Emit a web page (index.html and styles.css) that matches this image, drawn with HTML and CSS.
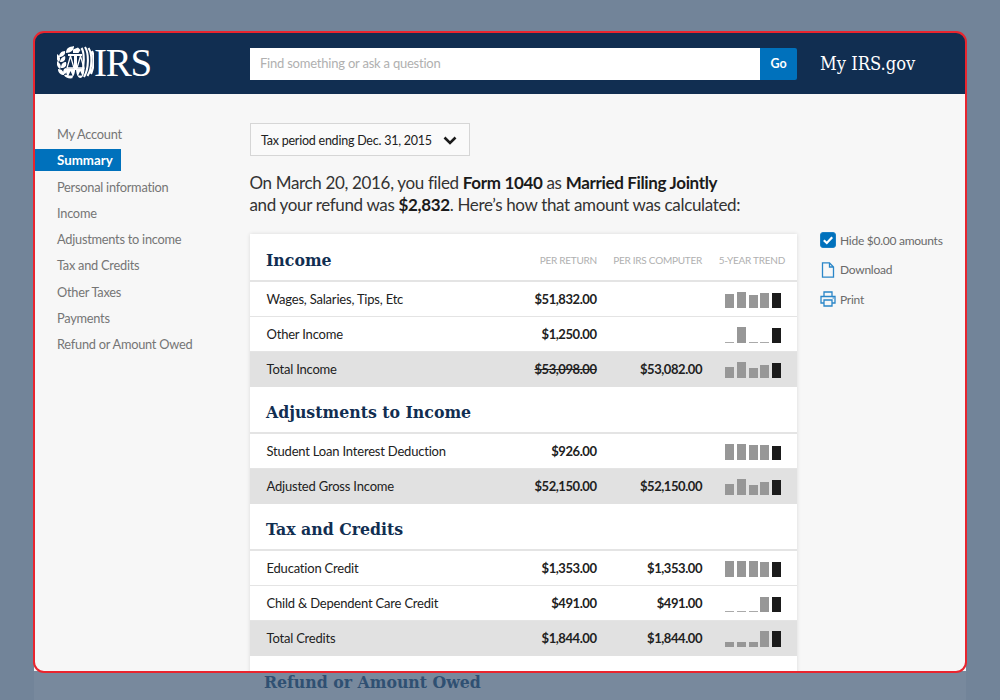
FILE: index.html
```html
<!DOCTYPE html>
<html lang="en">
<head>
<meta charset="utf-8">
<title>IRS Summary</title>
<link rel="stylesheet" href="styles.css">
</head>
<body>
<div class="app">
  <header class="top">
    <div class="logo">
      <svg class="eagle" width="37" height="33" viewBox="0 0 37 33">
        <g fill="#fff">
          <path d="M9 7C9 2 12 1 17 0c0 4-3 7-8 7z"/>
          <path d="M8 5C4 5 2 8 2 11c3 0 7-2 6-6z"/>
          <path d="M0 8c-1 4 0 7 2 8 2-3 1-6-2-8z"/>
          <path d="M8 10c-3 1-5 3-5 6 4 0 6-2 5-6z"/>
          <path d="M0 15c-1 4 1 7 3 8 2-3 0-6-3-8z"/>
          <path d="M9 16c-3 0-5 2-5 6 4 0 6-2 5-6z"/>
          <path d="M1 23c0 4 3 6 6 6 0-3-2-6-6-6z"/>
          <path d="M9 22c-2 0-3 2-3 6 3 0 5-2 3-6z"/>
          <path d="M7 29c1 3 6 4 9 3-2-2-6-4-9-3z"/>
          <path d="M11 8h14v2h-5v14h-3V10h-6z"/>
          <path d="M16 3.500l5-2 2.500 2.500-2 3H16z"/>
        </g>
        <g fill="none" stroke="#fff">
          <path stroke-width="2.100" d="M24.500 2c3 4 3 18 0 27M28 1c4 6 4 22-1 30M31.500 2c4 6 4 20-1 28M35 5c2.500 5 2.500 15-1 23"/>
          <path stroke-width="1.300" d="M13.500 10l-3.500 12h7zM23.500 10l-3.500 12h7z"/>
        </g>
        <path fill="#fff" d="M8.800 22.500h9.400c0 5-2 9.500-4.700 9.500s-4.700-4.500-4.700-9.500zM19 22.500h8.500c0 5-1.700 9.500-4.200 9.500S19 27.500 19 22.500z"/>
        <path fill="#112e51" d="M13.500 25l2 4.500h-4zM23.200 25l2 4.500h-4z"/>
      </svg>
      <span class="irs">IRS</span>
    </div>
    <div class="search">
      <div class="search-box">Find something or ask a question</div>
      <div class="go">Go</div>
    </div>
    <div class="site">My IRS.gov</div>
  </header>
  <div class="body">
    <nav class="nav">
      <a>My Account</a>
      <a class="active">Summary</a>
      <a>Personal information</a>
      <a>Income</a>
      <a>Adjustments to income</a>
      <a>Tax and Credits</a>
      <a>Other Taxes</a>
      <a>Payments</a>
      <a>Refund or Amount Owed</a>
    </nav>
    <main class="main">
      <div class="period"><span>Tax period ending Dec. 31, 2015</span>
        <svg width="14" height="9" viewBox="0 0 14 9"><path d="M1.500 1.500L7 7l5.500-5.500" fill="none" stroke="#1b1b1b" stroke-width="2.600"/></svg>
      </div>
      <p class="lead">On March 20, 2016, you filed <b>Form 1040</b> as <b>Married Filing Jointly</b><br>and your refund was <b>$2,832</b>. Here’s how that amount was calculated:</p>
      <div class="columns">
        <div class="sheet">
          <div class="head first">
            <h2>Income</h2>
            <span class="col">PER RETURN</span><span class="col wide">PER IRS COMPUTER</span><span class="col tr">5-YEAR TREND</span>
          </div>
          <div class="row"><span class="lbl">Wages, Salaries, Tips, Etc</span><span class="num">$51,832.00</span><span class="num"></span>
            <span class="trend"><i style="height:14px"></i><i style="height:16px"></i><i style="height:13px"></i><i style="height:15px"></i><i class="k" style="height:15px"></i></span></div>
          <div class="row"><span class="lbl">Other Income</span><span class="num">$1,250.00</span><span class="num"></span>
            <span class="trend"><i class="z"></i><i style="height:16px"></i><i class="z"></i><i class="z"></i><i class="k" style="height:15px"></i></span></div>
          <div class="row total"><span class="lbl">Total Income</span><span class="num"><s>$53,098.00</s></span><span class="num">$53,082.00</span>
            <span class="trend"><i style="height:11px"></i><i style="height:16px"></i><i style="height:10px"></i><i style="height:13px"></i><i class="k" style="height:15px"></i></span></div>
          <div class="head">
            <h2>Adjustments to Income</h2>
          </div>
          <div class="row"><span class="lbl">Student Loan Interest Deduction</span><span class="num">$926.00</span><span class="num"></span>
            <span class="trend"><i style="height:16px"></i><i style="height:16px"></i><i style="height:15px"></i><i style="height:15px"></i><i class="k" style="height:14px"></i></span></div>
          <div class="row total"><span class="lbl">Adjusted Gross Income</span><span class="num">$52,150.00</span><span class="num">$52,150.00</span>
            <span class="trend"><i style="height:11px"></i><i style="height:16px"></i><i style="height:10px"></i><i style="height:13px"></i><i class="k" style="height:15px"></i></span></div>
          <div class="head">
            <h2>Tax and Credits</h2>
          </div>
          <div class="row"><span class="lbl">Education Credit</span><span class="num">$1,353.00</span><span class="num">$1,353.00</span>
            <span class="trend"><i style="height:16px"></i><i style="height:16px"></i><i style="height:16px"></i><i style="height:15px"></i><i class="k" style="height:15px"></i></span></div>
          <div class="row"><span class="lbl">Child &amp; Dependent Care Credit</span><span class="num">$491.00</span><span class="num">$491.00</span>
            <span class="trend"><i class="z"></i><i class="z"></i><i class="z"></i><i style="height:15px"></i><i class="k" style="height:15px"></i></span></div>
          <div class="row total"><span class="lbl">Total Credits</span><span class="num">$1,844.00</span><span class="num">$1,844.00</span>
            <span class="trend"><i style="height:5px"></i><i style="height:5px"></i><i style="height:5px"></i><i style="height:16px"></i><i class="k" style="height:16px"></i></span></div>
          <div class="head last">
            <h2>Refund or Amount Owed</h2>
          </div>
        </div>
        <aside class="tools">
          <div class="tool">
            <svg width="16" height="16" viewBox="0 0 16 16"><rect x="0.500" y="0.500" width="15" height="15" rx="2.500" fill="#0071bc" stroke="#1a7fc4"/><path d="M3.800 8.200l3 2.800 5.400-5.800" fill="none" stroke="#fff" stroke-width="2.200"/></svg>
            <span>Hide $0.00 amounts</span></div>
          <div class="tool">
            <svg width="16" height="16" viewBox="0 0 16 16"><path d="M2.500 .8h7l4 4.200v10.200h-11z M9.500 .8v4.200h4" fill="none" stroke="#2a86c8" stroke-width="1.300"/></svg>
            <span>Download</span></div>
          <div class="tool">
            <svg width="16" height="16" viewBox="0 0 16 16"><path d="M4 5V1h8v4M4 12H1V5.500h14V12h-3M4 9h8v6H4z" fill="none" stroke="#2a86c8" stroke-width="1.300"/><path d="M12.500 7h1.500" stroke="#2a86c8"/></svg>
            <span>Print</span></div>
        </aside>
      </div>
    </main>
  </div>
</div>
<div class="dim"></div>
<div class="frame"></div>
</body>
</html>
```

FILE: styles.css
```css
* { box-sizing: border-box; }
html, body { margin: 0; height: 700px; overflow: hidden; }
body {
  background: #728499;
  font-family: Lato, "Noto Sans", sans-serif;
  color: #212121;
  position: relative;
}
.app {
  margin: 32px 34px 0;
  width: 932px;
  height: 668px;
  background: #f7f7f7;
  border-radius: 10px 10px 0 0;
  overflow: hidden;
}
.top {
  height: 62px;
  background: #112e51;
  display: flex;
  align-items: center;
  padding: 0 0 0 23px;
}
.logo { width: 193px; display: flex; align-items: center; margin-top: -1px; }
.eagle { display: block; }
.irs {
  font-family: "Liberation Serif", serif;
  font-size: 39px;
  line-height: 33px;
  color: #fff;
  letter-spacing: -1.300px;
}
.search { display: flex; width: 547px; height: 32px; margin-top: 2px; }
.search-box {
  flex: 1;
  background: #fff;
  color: #b0b0b0;
  font-size: 13px;
  letter-spacing: -.22px;
  line-height: 31px;
  padding-left: 10px;
}
.go {
  width: 37px;
  background: #0071bc;
  border-radius: 0 2px 2px 0;
  color: #fff;
  font-weight: 700;
  font-size: 12.500px;
  line-height: 32px;
  text-align: center;
}
.site {
  margin-left: 23px;
  color: #fff;
  font-family: "DejaVu Serif Condensed", "DejaVu Serif", serif;
  font-size: 18.200px;
}
.body { display: flex; }
.nav {
  width: 216px;
  padding-top: 29px;
  display: flex;
  flex-direction: column;
  align-items: flex-start;
}
.nav a {
  height: 22px;
  margin-bottom: 4.250px;
  padding: 0 8px 0 23px;
  font-size: 12.800px;
  letter-spacing: -.25px;
  line-height: 22px;
  color: #757575;
}
.nav a.active {
  background: #0071bc;
  color: #fff;
  font-size: 13.300px;
  letter-spacing: 0;
  font-weight: 700;
  width: 87px;
  padding-right: 0;
}
.main { width: 716px; padding-top: 29px; }
.period {
  width: 220px;
  height: 33px;
  border: 1px solid #d6d6d6;
  background: #fafafa;
  font-size: 12.500px;
  letter-spacing: -.23px;
  line-height: 31px;
  padding: 1px 12px 0 10px;
  display: flex;
  align-items: center;
  justify-content: space-between;
  white-space: nowrap;
}
.lead {
  margin: 16px 0 0 -.5px;
  font-size: 17px;
  letter-spacing: -.34px;
  line-height: 22px;
  font-weight: 400;
  color: #333;
  white-space: nowrap;
}
.lead b { font-weight: 700; color: #1b1b1b; }
.columns { display: flex; margin-top: 18px; }
.sheet {
  width: 547px;
  background: #fff;
  box-shadow: 0 0 4px rgba(0,0,0,.12);
}
.head {
  height: 47px;
  display: flex;
  align-items: center;
  padding: 5px 12px 0 16px;
  border-bottom: 2px solid #e4e4e4;
}
.head.first { height: 48px; padding-top: 6px; }
.head.last { border-bottom: 0; padding-top: 4px; }
.head h2 {
  margin: 0;
  flex: 1;
  font-family: "DejaVu Serif Condensed", "DejaVu Serif", serif;
  font-size: 17.500px;
  font-weight: 700;
  color: #112e51;
}
.col {
  font-size: 10px;
  letter-spacing: -.25px;
  color: #b0b0b0;
  text-align: right;
  white-space: nowrap;
}
.col.wide { width: 105px; }
.col.tr { width: 83px; }
.row {
  height: 35px;
  display: flex;
  align-items: center;
  font-size: 13px;
  letter-spacing: -.2px;
  padding-left: 16.500px;
  border-bottom: 1px solid #e4e4e4;
}
.row.total { background: #e1e1e1; border-bottom-color: transparent; }
.lbl { width: 224.500px; }
.num { width: 105.500px; text-align: right; font-weight: 700; letter-spacing: -.44px; }
.trend {
  margin-left: 23px;
  display: flex;
  gap: 2.800px;
  align-items: flex-end;
  height: 17px;
}
.trend i {
  display: block;
  width: 9px;
  background: #979797;
}
.trend i.k { background: #1b1b1b; }
.trend i.z { height: 1px; background: #aaa; }
.tools { margin-left: 23px; margin-top: -2px; }
.tool {
  display: flex;
  align-items: center;
  gap: 4px;
  height: 16px;
  margin-bottom: 13.500px;
  font-size: 12px;
  letter-spacing: -.26px;
  color: #6a6a6a;
  white-space: nowrap;
}
.head.last h2 {
  position: relative;
  z-index: 2;
  margin-left: -2px;
  color: #2f5072;
}
.dim {
  position: absolute;
  left: 34px;
  top: 671px;
  width: 932px;
  height: 29px;
  background: rgba(114,132,153,.96);
  z-index: 1;
}
.frame {
  position: absolute;
  left: 33px;
  top: 31px;
  width: 934px;
  height: 642px;
  border: 2px solid #e9252e;
  border-radius: 11px;
  z-index: 3;
}
```
